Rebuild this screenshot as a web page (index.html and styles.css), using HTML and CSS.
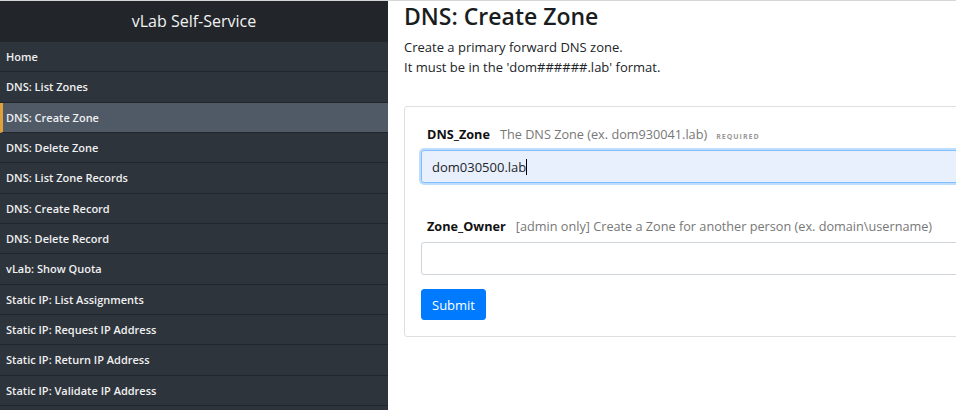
FILE: index.html
```html
<!DOCTYPE html>
<html lang="en">
<head>
<meta charset="utf-8">
<title>vLab Self-Service</title>
<link rel="stylesheet" href="styles.css">
</head>
<body>
<div class="page">
  <nav class="sidebar">
    <div class="brand">vLab Self-Service</div>
    <a class="nav-item" href="#">Home</a>
    <a class="nav-item" href="#">DNS: List Zones</a>
    <a class="nav-item active" href="#">DNS: Create Zone</a>
    <a class="nav-item" href="#">DNS: Delete Zone</a>
    <a class="nav-item" href="#">DNS: List Zone Records</a>
    <a class="nav-item" href="#">DNS: Create Record</a>
    <a class="nav-item" href="#">DNS: Delete Record</a>
    <a class="nav-item" href="#">vLab: Show Quota</a>
    <a class="nav-item" href="#">Static IP: List Assignments</a>
    <a class="nav-item" href="#">Static IP: Request IP Address</a>
    <a class="nav-item" href="#">Static IP: Return IP Address</a>
    <a class="nav-item" href="#">Static IP: Validate IP Address</a>
  </nav>
  <main class="main">
    <h1 class="title">DNS: Create Zone</h1>
    <p class="intro">Create a primary forward DNS zone.<br>It must be in the 'dom######.lab' format.</p>
    <form class="card">
      <div class="field">
        <label class="label"><span class="name">DNS_Zone</span><span class="help">The DNS Zone (ex. dom930041.lab)</span><span class="req">REQUIRED</span></label>
        <div class="input focused">dom030500.lab<span class="caret"></span></div>
      </div>
      <div class="field second">
        <label class="label"><span class="name">Zone_Owner</span><span class="help">[admin only] Create a Zone for another person (ex. domain\username)</span></label>
        <div class="input"></div>
      </div>
      <button class="btn" type="button">Submit</button>
    </form>
  </main>
</div>
</body>
</html>
```

FILE: styles.css
```css
html, body {
  margin: 0;
  padding: 0;
  background: #fff;
  overflow: hidden;
}
.page {
  display: flex;
  width: 1200px;
  height: 410px;
  border-top: 1px solid #d6d6d6;
  box-sizing: border-box;
  overflow: hidden;
}
.sidebar {
  width: 388px;
  flex: none;
  background: #2e343b;
  display: flex;
  flex-direction: column;
  font-family: "Open Sans", sans-serif;
}
.brand {
  height: 41px;
  line-height: 41px;
  background: #22262b;
  color: #f2f2f2;
  text-align: center;
  font-size: 16px;
  flex: none;
}
.nav-item {
  display: flex;
  align-items: center;
  height: 30.33px;
  box-sizing: border-box;
  padding-left: 6px;
  border-bottom: 1px solid #22262b;
  color: #eef0f2;
  font-size: 11px;
  font-weight: 600;
  text-decoration: none;
  flex: none;
}
.nav-item.active {
  background: #4f5a66;
  border-left: 3px solid #e0a13b;
  padding-left: 3px;
}
.main {
  padding-left: 16px;
  font-family: "Open Sans", sans-serif;
  color: #212529;
}
.title {
  margin: 0;
  font-size: 23px;
  font-weight: 600;
  line-height: 30px;
  color: #1a1d20;
}
.intro {
  margin: 6px 0 0;
  font-size: 13px;
  line-height: 20px;
}
.card {
  margin-top: 29px;
  width: 640px;
  border: 1px solid #dfdfdf;
  border-radius: 3px;
  padding: 18px 16px 16px;
  box-sizing: border-box;
}
.field {
  margin-bottom: 14px;
}
.field.second {
  margin-top: 34px;
}
.label {
  display: flex;
  align-items: baseline;
  padding-left: 6px;
  margin-bottom: 7px;
  font-size: 12.7px;
}
.name {
  font-weight: 700;
  color: #111;
  margin-right: 10px;
}
.help {
  color: #777;
}
.req {
  margin-left: 9px;
  font-size: 7px;
  font-weight: 700;
  letter-spacing: 1px;
  color: #999;
}
.input {
  height: 33px;
  box-sizing: border-box;
  border: 1px solid #ced4da;
  border-radius: 3px;
  font-size: 13px;
  display: flex;
  align-items: center;
  padding-left: 10px;
  color: #212529;
}
.input.focused {
  background: #e8f0fe;
  border-color: #80bdff;
  box-shadow: 0 0 0 2px rgba(0, 123, 255, 0.25);
}
.caret {
  display: inline-block;
  width: 1px;
  height: 16px;
  background: #000;
}
.btn {
  height: 31px;
  padding: 0 10px;
  background: #007bff;
  border: 1px solid #007bff;
  border-radius: 3px;
  color: #fff;
  font-family: "Open Sans", sans-serif;
  font-size: 13px;
}
```
